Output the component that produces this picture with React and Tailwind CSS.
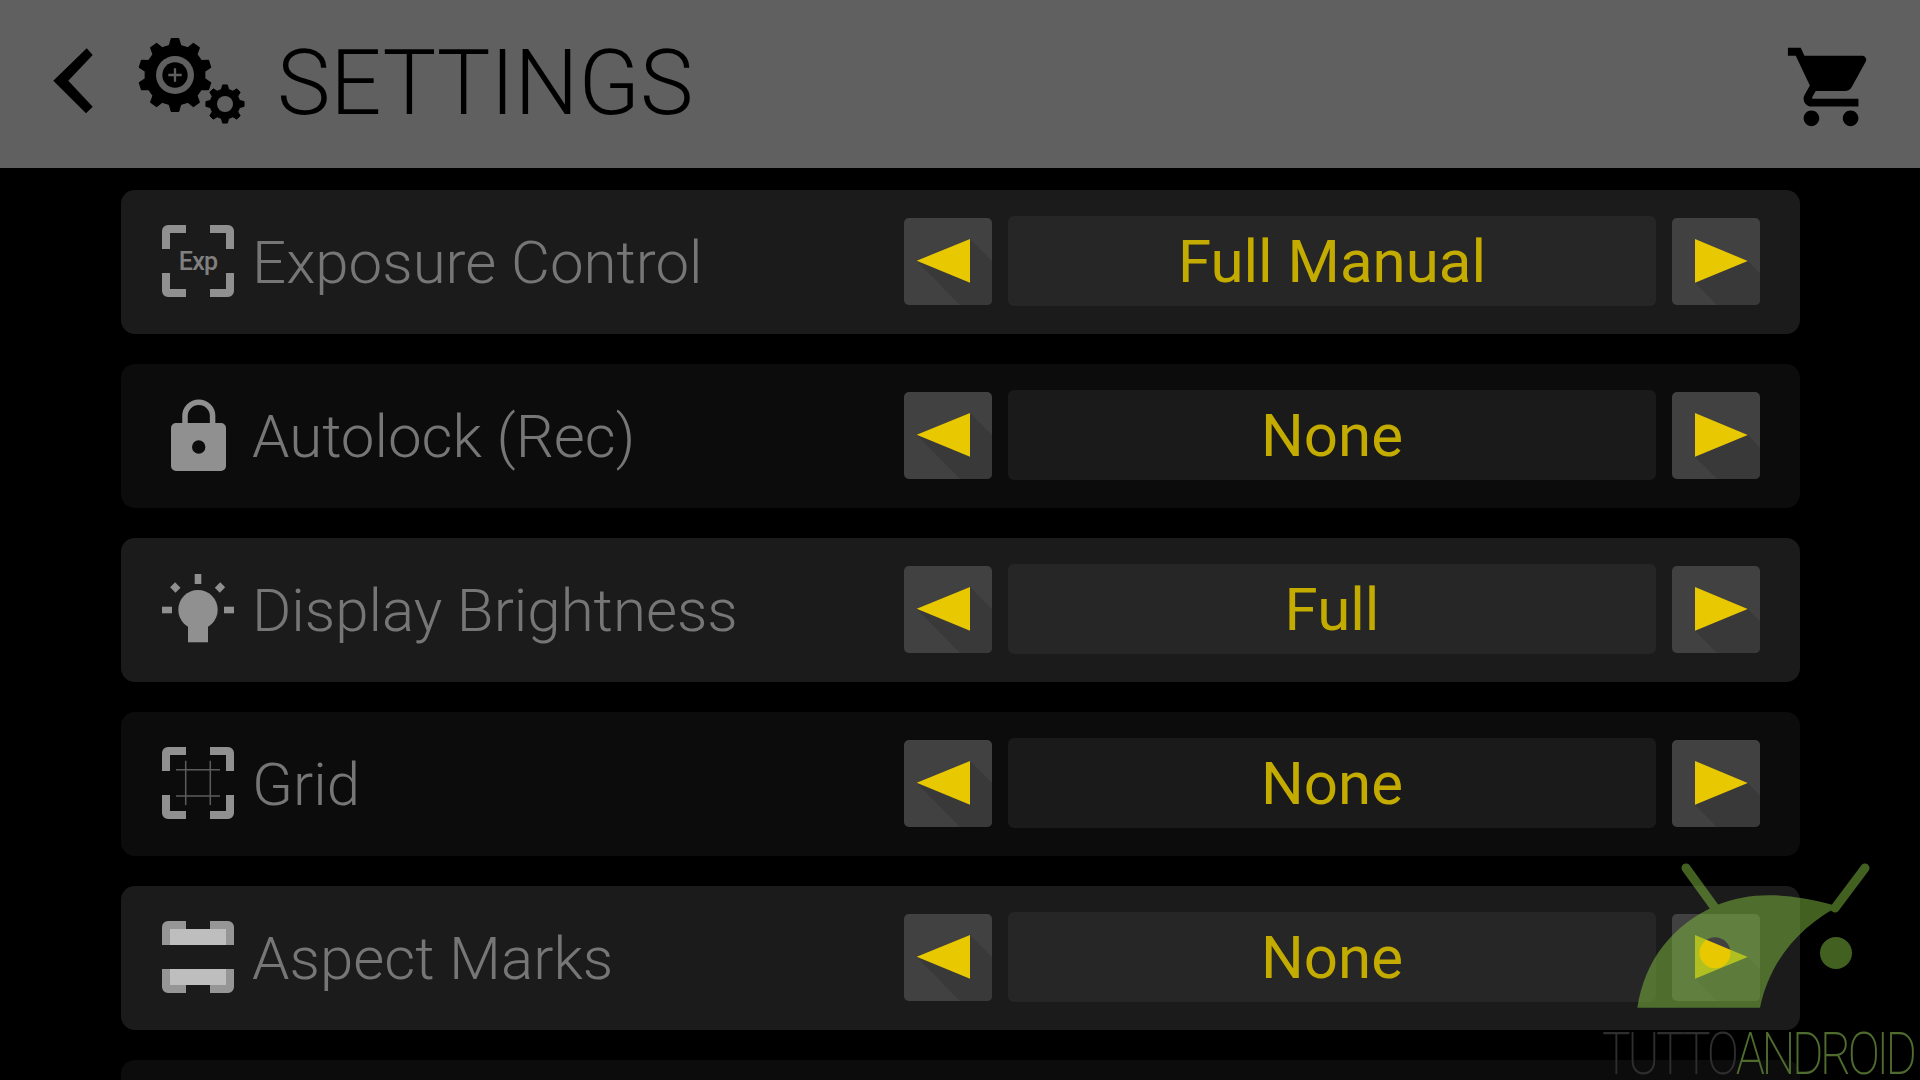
import React from "react";

const gearPath = (cx, cy, rOut, rIn, teeth) => {
  const pts = [];
  const step = (Math.PI * 2) / teeth;
  for (let i = 0; i < teeth; i++) {
    const a = -Math.PI / 2 + i * step;
    const at = (r, off) => `${(cx + r * Math.cos(a + off * step)).toFixed(2)} ${(cy + r * Math.sin(a + off * step)).toFixed(2)}`;
    pts.push(`${i === 0 ? "M" : "L"}${at(rIn, -0.3)}`);
    pts.push(`L${at(rOut, -0.16)}`);
    pts.push(`L${at(rOut, 0.16)}`);
    pts.push(`L${at(rIn, 0.3)}`);
  }
  return pts.join(" ") + "Z";
};

const circlePath = (cx, cy, r) => `M${cx - r} ${cy}a${r} ${r} 0 1 0 ${r * 2} 0a${r} ${r} 0 1 0 ${-r * 2} 0Z`;

const Corners = ({ fill = "#909090" }) => (
  <path
    fill={fill}
    d="M24 0H6a6 6 0 0 0-6 6v18h8V8h16ZM48 0h18a6 6 0 0 1 6 6v18h-8V8H48ZM24 72H6a6 6 0 0 1-6-6V48h8v16h16ZM48 72h18a6 6 0 0 0 6-6V48h-8v16H48Z"
  />
);

const ExpIcon = () => (
  <div className="relative w-[72px] h-[72px] flex items-center justify-center">
    <svg viewBox="0 0 72 72" className="absolute inset-0 w-[72px] h-[72px]">
      <Corners />
    </svg>
    <span className="font-['Roboto',sans-serif] font-medium text-[25px] leading-none text-[#808080] tracking-[-0.8px]">Exp</span>
  </div>
);

const LockIcon = () => (
  <div className="w-[72px] h-[72px] flex items-center justify-center">
    <svg viewBox="0 0 55 72" className="w-[55px] h-[72px]">
      <path d="M14 26V17a13.8 13.8 0 0 1 27.6 0v9" fill="none" stroke="#909090" strokeWidth="5.5" />
      <path fill="#909090" fillRule="evenodd" d={"M5 24h45a5 5 0 0 1 5 5v38a5 5 0 0 1-5 5H5a5 5 0 0 1-5-5V29a5 5 0 0 1 5-5Z" + circlePath(27.7, 48, 6.7)} />
    </svg>
  </div>
);

const BulbIcon = () => (
  <svg viewBox="0 -1 72 72" className="w-[72px] h-[72px]" fill="#909090">
    <rect x="32.7" y="0" width="6.6" height="10" />
    <rect x="0" y="32.7" width="10" height="6.6" />
    <rect x="62" y="32.7" width="10" height="6.6" />
    <rect x="9.5" y="10" width="7.6" height="7" transform="rotate(45 13.3 13.5)" />
    <rect x="54.2" y="10" width="7.6" height="7" transform="rotate(-45 58 13.5)" />
    <circle cx="36" cy="35.7" r="19.7" />
    <rect x="26" y="48" width="20" height="20.3" />
  </svg>
);

const GridIcon = () => (
  <svg viewBox="0 0 72 72" className="w-[72px] h-[72px]">
    <Corners />
    <path d="M14 22.7H58M14 49H58M23.7 13.7V58M48.3 13.7V58" stroke="#5c5c5c" strokeWidth="1.5" fill="none" />
  </svg>
);

const AspectIcon = () => (
  <svg viewBox="0 0 72 72" className="w-[72px] h-[72px]">
    <path
      fill="#969696"
      d="M24 0H6a6 6 0 0 0-6 6v18h24ZM48 0h18a6 6 0 0 1 6 6v18H48ZM24 72H6a6 6 0 0 1-6-6V48h24ZM48 72h18a6 6 0 0 0 6-6V48H48Z"
    />
    <rect x="8" y="8" width="56" height="16" fill="#bebebe" />
    <rect x="8" y="48" width="56" height="16" fill="#bebebe" />
  </svg>
);

const ArrowButton = ({ dir }) => (
  <button className="w-[88px] h-[87px] rounded-[5px] bg-[#414141] overflow-hidden shrink-0">
    <svg viewBox="0 0 88 87" className="w-[88px] h-[87px] block">
      {dir === "left" ? (
        <>
          <polygon points="66,21 88,43 88,87 56,87 12.7,42.7" fill="#393939" />
          <polygon points="12.7,42.7 66,21 66,64.7" fill="#e8c800" />
        </>
      ) : (
        <>
          <polygon points="75.7,43 88,55.5 88,87 45,87 23,64.7" fill="#393939" />
          <polygon points="23,21 75.7,43 23,64.7" fill="#e8c800" />
        </>
      )}
    </svg>
  </button>
);

const rows = [
  { label: "Exposure Control", value: "Full Manual", icon: <ExpIcon /> },
  { label: "Autolock (Rec)", value: "None", icon: <LockIcon /> },
  { label: "Display Brightness", value: "Full", icon: <BulbIcon /> },
  { label: "Grid", value: "None", icon: <GridIcon /> },
  { label: "Aspect Marks", value: "None", icon: <AspectIcon /> },
];

const SettingRow = ({ row, dark }) => (
  <div className={`h-[144px] shrink-0 rounded-[14px] pl-[41px] pr-[40px] flex items-center ${dark ? "bg-[#0c0c0c]" : "bg-[#1b1b1b]"}`}>
    <div className="shrink-0 mb-[2px]">{row.icon}</div>
    <span className="flex-1 ml-[18px] pt-[2px] text-[60px] leading-none font-light text-[#767676]">{row.label}</span>
    <div className="flex items-center gap-[16px] mb-[2px]">
      <ArrowButton dir="left" />
      <div className={`w-[648px] h-[90px] pt-[2px] rounded-[6px] flex items-center justify-center text-[60px] leading-none text-[#c4ab00] ${dark ? "bg-[#1a1a1a]" : "bg-[#262626]"}`}>
        {row.value}
      </div>
      <ArrowButton dir="right" />
    </div>
  </div>
);

const Watermark = () => (
  <div className="absolute left-[1600px] top-[860px] w-[320px] h-[220px]">
    <svg viewBox="1600 860 320 150" className="absolute left-0 top-0 w-[320px] h-[150px]">
      <g opacity="0.52" fill="#7fb93e">
        <path d="M1686 868L1715 908M1865 868L1835 908" stroke="#7fb93e" strokeWidth="9" strokeLinecap="round" fill="none" />
        <path
          fillRule="evenodd"
          d={"M1637.3 1007.7C1645 960 1672 925 1717 905C1750 892 1785 892 1833 905L1845 902.7C1800 925 1770 960 1760 1007.7Z" + circlePath(1715, 952.7, 15.5)}
        />
        <circle cx="1836" cy="953" r="16" />
      </g>
    </svg>
    <div className="absolute left-[2px] top-[172px] flex origin-left scale-x-[0.8] font-['Roboto',sans-serif] font-extralight text-[60px] leading-[44px] tracking-[-4px] whitespace-nowrap">
      <span className="text-[#2e2e2e]">TUTTO</span>
      <span className="text-[#4f6b2e] tracking-[-4.3px]">ANDROID</span>
    </div>
  </div>
);

export default function App() {
  return (
    <div className="relative w-[1920px] h-[1080px] overflow-hidden bg-black font-['Roboto',sans-serif]">
      {/* Header */}
      <header className="h-[168px] bg-[#606060] flex items-center pl-[53px] pr-[42px] pb-[6px]">
        <svg viewBox="53 48 40 66" className="w-[40px] h-[66px] shrink-0">
          <polygon points="53.3,80.7 86.7,48.3 92.7,55 68.3,80.7 92.7,106.7 86,113.3" fill="#000" />
        </svg>
        <svg viewBox="138 38 107 86" className="w-[107px] h-[86px] ml-[45px] shrink-0">
          <path d={gearPath(175, 75, 36.5, 30, 10)} fill="#000" stroke="#000" strokeWidth="1.2" strokeLinejoin="round" />
          <circle cx="175" cy="75" r="19" fill="#606060" />
          <circle cx="175" cy="75" r="12.7" fill="#000" />
          <path d="M175 68.3V81.7M168.3 75H181.7" stroke="#606060" strokeWidth="2.3" />
          <path d={gearPath(225, 104, 19.2, 15, 8)} fill="#000" stroke="#000" strokeWidth="1" strokeLinejoin="round" />
          <circle cx="225" cy="104" r="8" fill="#606060" />
        </svg>
        <h1 className="ml-[32px] mt-[5px] text-[90px] leading-none font-light text-black">SETTINGS</h1>
        <svg viewBox="0 0 24 24" className="ml-auto mt-[12px] w-[94px] h-[94px] shrink-0" fill="#000">
          <path d="M7 18c-1.1 0-1.99.9-1.99 2S5.9 22 7 22s2-.9 2-2-.9-2-2-2zM1 2v2h2l3.6 7.59-1.35 2.45c-.16.28-.25.61-.25.96 0 1.1.9 2 2 2h12v-2H7.42c-.14 0-.25-.11-.25-.25l.03-.12.9-1.63h7.45c.75 0 1.41-.41 1.75-1.03l3.58-6.49c.08-.14.12-.31.12-.48 0-.55-.45-1-1-1H5.21l-.94-2H1zm16 16c-1.1 0-1.99.9-1.99 2s.89 2 1.99 2 2-.9 2-2-.9-2-2-2z" />
        </svg>
      </header>

      {/* Settings list */}
      <main className="ml-[121px] w-[1679px] pt-[22px] flex flex-col gap-[30px]">
        {rows.map((row, i) => (
          <SettingRow key={row.label} row={row} dark={i % 2 === 1} />
        ))}
        <div className="h-[144px] shrink-0 rounded-[14px] bg-[#0c0c0c]" />
      </main>

      <Watermark />
    </div>
  );
}
